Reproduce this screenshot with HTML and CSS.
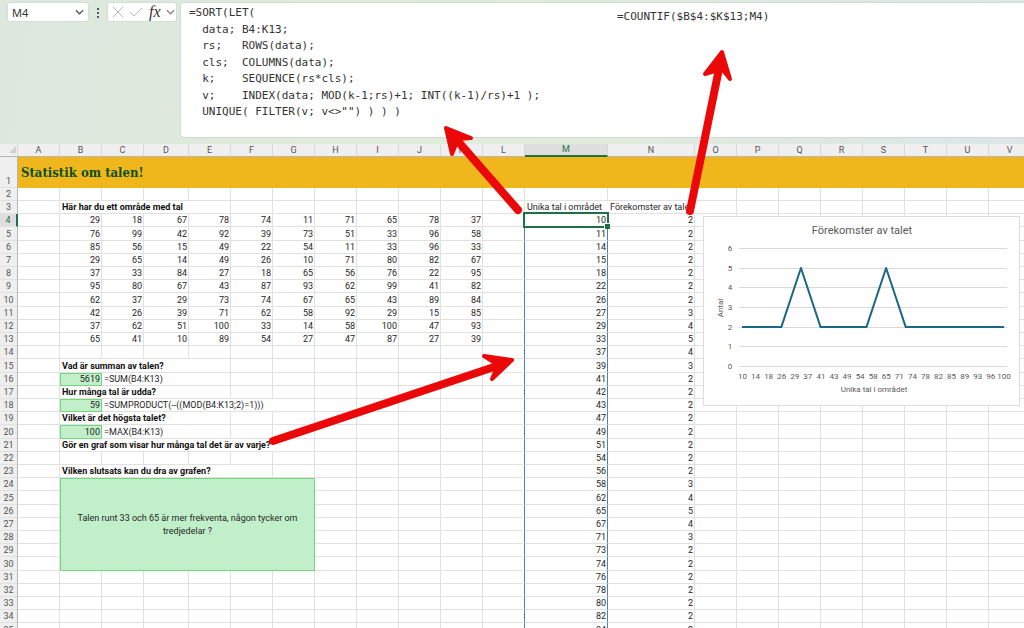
FILE: index.html
```
<!DOCTYPE html>
<html lang="sv">
<head>
<meta charset="utf-8">
<title>Statistik om talen</title>
<link rel="stylesheet" href="styles.css">
</head>
<body>
<main class="app">
  <header class="formula-bar">
    <div class="tools">
      <label class="name-box" aria-label="Namnruta"><select class="name-select"><option>M4</option></select>
        <svg class="chevron" viewBox="0 0 10 6" width="9" height="6"><path d="M1 1l4 4 4-4"/></svg>
      </label>
      <span class="dots"><i></i><i></i><i></i></span>
      <div class="fx-box">
        <button class="tool" type="button" aria-label="Avbryt"><svg width="12" height="12" viewBox="0 0 12 12"><path d="M1 1l10 10M11 1L1 11"/></svg></button>
        <button class="tool" type="button" aria-label="Ange"><svg width="14" height="12" viewBox="0 0 14 12"><path d="M1 6l4 4 8-8"/></svg></button>
        <button class="tool fx" type="button">fx</button>
        <button class="tool dark" type="button" aria-label="Fler funktioner"><svg width="9" height="6" viewBox="0 0 10 6"><path d="M1 1l4 4 4-4"/></svg></button>
      </div>
    </div>
    <div class="formula-pane">
      <textarea class="formula" aria-label="Formel" spellcheck="false">=SORT(LET(
  data; B4:K13;
  rs;   ROWS(data);
  cls;  COLUMNS(data);
  k;    SEQUENCE(rs*cls);
  v;    INDEX(data; MOD(k-1;rs)+1; INT((k-1)/rs)+1 );
  UNIQUE( FILTER(v; v&lt;&gt;"") ) ) )</textarea>
      <p class="formula-note">=COUNTIF($B$4:$K$13;M4)</p>
    </div>
  </header>
  <table class="sheet" id="sheet"></table>
  <section class="chart">
    <svg viewBox="0 0 316 190" width="316" height="190">
      <text class="chart-title" x="158" y="17">Förekomster av talet</text>
      <g id="chart-grid"></g>
      <polyline class="series" id="series"/>
      <text class="axis-title" x="170" y="175">Unika tal i området</text>
      <text class="axis-title" transform="translate(19 91) rotate(-90)">Antal</text>
    </svg>
  </section>
  <svg class="arrows" width="1024" height="628" viewBox="0 0 1024 628">
    <g class="arrow"><path class="shaft" d="M518 210L455 138"/><path class="head" d="M446 128l25 10-13 1-6 15z"/></g>
    <g class="arrow"><path class="shaft" d="M690 211L720 64"/><path class="head" d="M722 52l8 27-8-10-17 5z"/></g>
    <g class="arrow"><path class="shaft" d="M273 441L500 365"/><path class="head" d="M512 360l-28-4 14 9-6 14z"/></g>
  </svg>
</main>
<script src="sheet.js"></script>
</body>
</html>
```
FILE: styles.css
```
* { box-sizing: border-box; }
body { margin: 0; font-family: Roboto, "Liberation Sans", sans-serif; color: #262626; }
.app { position: relative; height: 100vh; overflow: hidden; background: #fff; }

.formula-bar { display: flex; height: 144px; padding: 2px 0 6px 7px; background: linear-gradient(100deg, #dce8de, #e1ecda 50%, #dce6e8); }
.tools { display: flex; gap: 8px; width: 173px; flex: none; align-items: flex-start; }
.name-box, .fx-box { display: flex; align-items: center; height: 20px; background: #fff; border: 1px solid #d6ddd7; border-radius: 3px; }
.name-box { width: 82px; padding-right: 4px; }
.name-select { flex: 1; appearance: none; border: 0; padding: 0 4px; background: none; font: 11px "Noto Sans", sans-serif; color: #333; }
.chevron, .tool svg { fill: none; stroke: #555; stroke-width: 1.4; }
.dots { display: flex; flex-direction: column; gap: 2px; padding-top: 6px; }
.dots i { width: 2px; height: 2px; background: #555; }
.fx-box { width: 70px; justify-content: space-between; padding: 0 1px 0 4px; }
.tool { display: flex; align-items: center; border: 0; padding: 0; background: none; }
.tool svg { stroke: #bbb; stroke-width: 1; }
.tool.dark svg { stroke: #888; stroke-width: 1.4; }
.fx { font: italic 400 16px "Liberation Serif", serif; color: #333; }
.formula-pane { display: flex; flex: 1; background: #fff; border: 1px solid #d3dad4; border-right: 0; border-radius: 3px 0 0 3px; }
.formula, .formula-note { margin: 0; font: 11px/1.5 "DejaVu Sans Mono", monospace; color: #333; }
.formula { flex: none; width: 436px; padding: 2px 8px; border: 0; background: none; resize: none; overflow: hidden; outline: 0; }
.formula-note { padding-top: 6px; }

.sheet { border-collapse: separate; border-spacing: 0; table-layout: fixed; width: 1031px; font-size: 9px; line-height: 12px; font-variant-ligatures: none; }
.sheet th, .sheet td { padding: 0; border: solid #e1e1e1; border-width: 0 1px 1px 0; white-space: nowrap; }
.sheet tr { height: 13px; }
.sheet tbody tr:nth-child(5n) { height: 14px; }
.sheet tbody tr:first-child { height: 31px; }
.sheet th { background: #efefef; color: #555; font-weight: 400; border-color: #d8d8d8; }
.sheet thead th { border-bottom-color: #b5b5b5; }
.sheet tbody th { border-right-color: #b5b5b5; border-bottom-color: #e1e1e1; }
.sheet tbody tr:first-child th { vertical-align: bottom; }
.sheet thead th.current { background: #dedede; color: #1f7145; border-bottom: 2px solid #1f7145; line-height: 11px; }
.sheet tbody th.current { background: #dedede; color: #1f7145; border-right: 2px solid #1f7145; }
.sheet .banner { padding-left: 3px; border-color: #f0b71c; background: #f0b71c; color: #0c4f1e; font: 700 13px "DejaVu Serif Condensed", "DejaVu Serif", serif; text-align: left; }
.num { text-align: right; }
.sheet .num { padding-right: 1px; }
.sheet .text { padding-left: 2px; overflow: visible; border-right-color: #fff; }
.bold { font-weight: 700; color: #111; }
.sheet .answer { background: #c1efca; border: 1px solid #74d67e; line-height: 11px; }
.sheet .essay { padding: 0 16px; white-space: normal; text-align: center; line-height: 13px; }
.sheet .before-m, .sheet .spill { border-right-color: #4e7fc4; }
.sheet .active { position: relative; }
.active::before { content: ""; position: absolute; inset: -2px; border: 2px solid #1f7145; }
.active::after { content: ""; position: absolute; right: -3px; bottom: -3px; width: 5px; height: 5px; background: #1f7145; border: solid #fff; border-width: 1px 0 0 1px; }

.chart { position: absolute; left: 703px; top: 216px; width: 317px; height: 190px; background: #fff; border: 1px solid #dcdcdc; }
.chart svg { display: block; }
.chart text { font-size: 8px; fill: #595959; text-anchor: middle; }
.chart .chart-title { font-size: 11px; }
.gridline { stroke: #d9d9d9; }
.series { fill: none; stroke: #1b6787; stroke-width: 2; stroke-linejoin: round; }

.arrows { position: absolute; left: 0; top: 0; pointer-events: none; }
.arrow path { stroke: #ea0808; stroke-linecap: round; stroke-linejoin: round; }
.shaft { stroke-width: 8; }
.arrow .head { fill: #ea0808; stroke-width: 4; }
```
FILE: sheet.js
```
const columns = "ABCDEFGHIJKLMNOPQRSTUV".split("");
const widths = { D: 45, M: 83, N: 87 };
const numbers = [
  [29,18,67,78,74,11,71,65,78,37], [76,99,42,92,39,73,51,33,96,58],
  [85,56,15,49,22,54,11,33,96,33], [29,65,14,49,26,10,71,80,82,67],
  [37,33,84,27,18,65,56,76,22,95], [95,80,67,43,87,93,62,99,41,82],
  [62,37,29,73,74,67,65,43,89,84], [42,26,39,71,62,58,92,29,15,85],
  [37,62,51,100,33,14,58,100,47,93], [65,41,10,89,54,27,47,87,27,39]
];
const unique = [10,11,14,15,18,22,26,27,29,33,37,39,41,42,43,47,49,51,54,56,58,62,65,67,71,73,74,76,78,80,82,84];
const counts = [2,2,2,2,2,2,2,3,4,5,4,3,2,2,2,2,2,2,2,2,3,4,5,4,3,2,2,2,2,2,2,2];

const cells = {};
numbers.forEach((row, r) => row.forEach((n, c) => { cells[columns[c + 1] + (r + 4)] = { t: n, c: "num" }; }));
unique.forEach((n, i) => {
  cells["M" + (i + 4)] = { t: n, c: "num spill" + (i === 0 ? " active" : "") };
  cells["N" + (i + 4)] = { t: counts[i], c: "num" };
  cells["L" + (i + 4)] = { t: "", c: "before-m" };
});
const label = (ref, t, span, cls = "text bold") => { cells[ref] = { t, c: cls, span }; };
label("B3", "Här har du ett område med tal", 3);
label("M3", "Unika tal i området", 1, "text");
label("N3", "Förekomster av talet", 1, "text");
label("B15", "Vad är summan av talen?", 3);
label("C16", "=SUM(B4:K13)", 2, "text");
label("B17", "Hur många tal är udda?", 3);
label("C18", "=SUMPRODUCT(--((MOD(B4:K13;2)=1)))", 4, "text");
label("B19", "Vilket är det högsta talet?", 3);
label("C20", "=MAX(B4:K13)", 2, "text");
label("B21", "Gör en graf som visar hur många tal det är av varje?", 5);
label("B23", "Vilken slutsats kan du dra av grafen?", 4);
cells.B16 = { t: 5619, c: "num answer" };
cells.B18 = { t: 59, c: "num answer" };
cells.B20 = { t: 100, c: "num answer" };
cells.B24 = { t: "Talen runt 33 och 65 är mer frekventa, någon tycker om tredjedelar ?", c: "answer essay", span: 6, rows: 7 };
cells.A1 = { t: "Statistik om talen!", c: "banner", span: 22 };

let html = '<colgroup><col style="width:18px">' + columns.map(c => `<col style="width:${widths[c] || 42}px">`).join("") + "</colgroup>";
html += '<thead><tr><th><svg width="8" height="8" viewBox="0 0 8 8" style="display:block;margin-left:auto"><path d="M7 0v7H0z" fill="#d0d0d0"/></svg></th>' + columns.map(c => `<th class="${c === "M" ? "current" : ""}">${c}</th>`).join("") + "</tr></thead><tbody>";
for (let r = 1; r <= 35; r++) {
  html += `<tr><th class="${r === 4 ? "current" : ""}">${r}</th>`;
  for (let c = 0; c < columns.length; c++) {
    const inEssay = r > 24 && r <= 30 && c >= 1 && c <= 6;
    if (inEssay) continue;
    const cell = cells[columns[c] + r];
    if (!cell) { html += "<td></td>"; continue; }
    html += `<td class="${cell.c}" colspan="${cell.span || 1}" rowspan="${cell.rows || 1}">${cell.t}</td>`;
    c += (cell.span || 1) - 1;
  }
  html += "</tr>";
}
document.getElementById("sheet").innerHTML = html + "</tbody>";

const plot = { left: 35, right: 303, bottom: 150, unit: 19.7 };
const grid = [];
for (let v = 0; v <= 6; v++) {
  const y = Math.round(plot.bottom - v * plot.unit) - 0.5;
  grid.push(`<path class="gridline" d="M${plot.left} ${y}H${plot.right}"/><text x="26" y="${y + 2.5}">${v}</text>`);
}
const ticks = [10,14,18,26,29,37,41,43,49,54,58,65,71,74,78,82,85,89,93,96,100];
ticks.forEach((t, i) => grid.push(`<text x="${38.5 + i * 13.07}" y="162">${t}</text>`));
document.getElementById("chart-grid").innerHTML = grid.join("");
const levels = [[0,2],[6,2],[9,5],[12,2],[19,2],[22,5],[25,2],[40,2]];
document.getElementById("series").setAttribute("points", levels.map(([i, v]) => `${38 + i * 6.55},${149.5 - v * plot.unit}`).join(" "));
```
